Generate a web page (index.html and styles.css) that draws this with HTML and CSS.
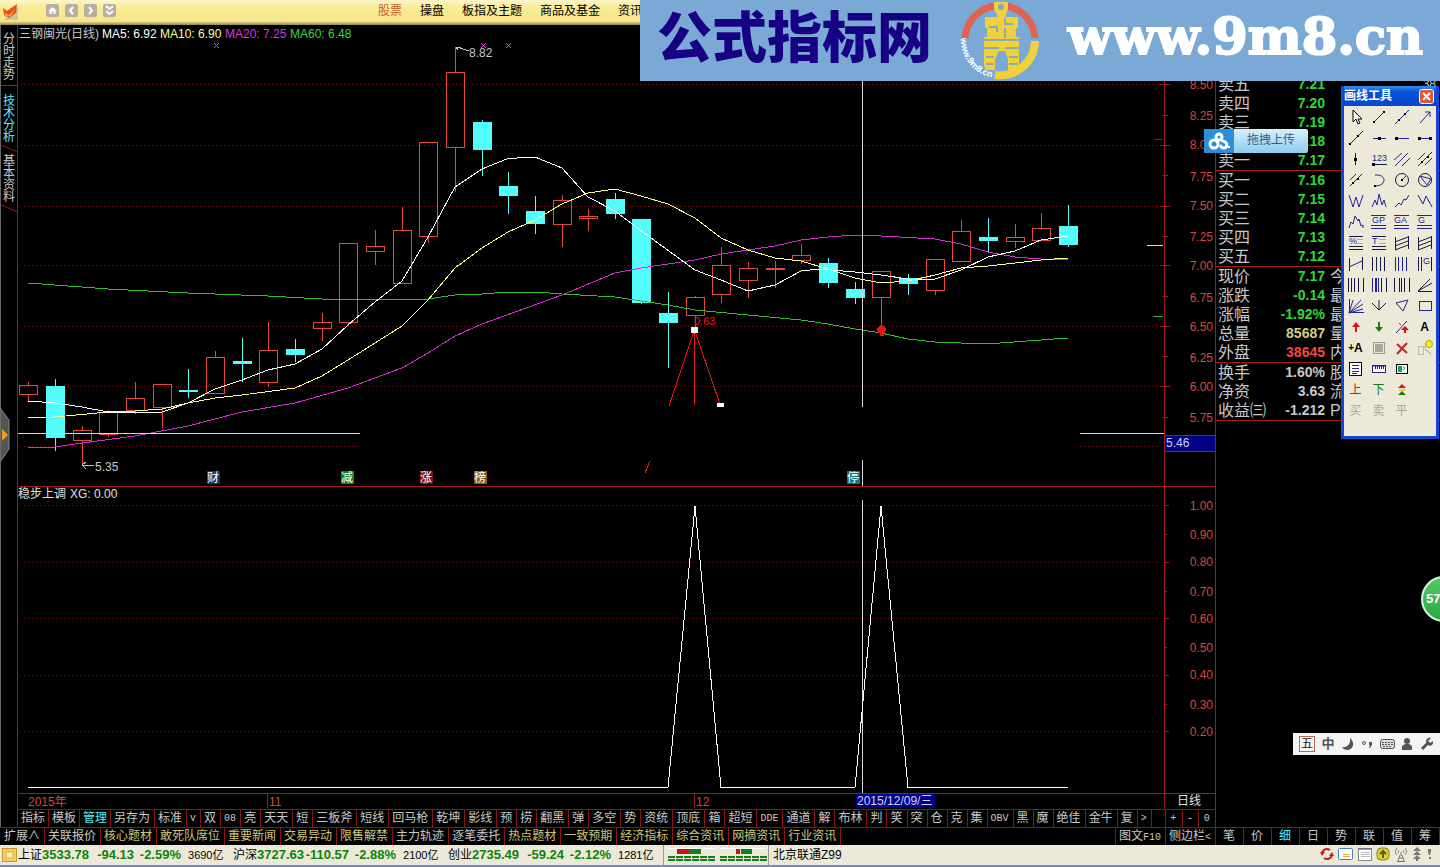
FILE: index.html
```html
<!DOCTYPE html>
<html lang="zh-CN">
<head>
    <meta charset="UTF-8">
    <title>三钢闽光(日线)</title>
    <link rel="stylesheet" href="styles.css">
</head>
<body>
    <header class="topbar">
        <svg class="logo" width="17" height="18" viewBox="0 0 17 18"><path d="M8 5h8v12H3z" fill="#c9c3a8"/><path d="M1 5l4 3L15 1l-1 9-7 5-5-3z" fill="#e8501c"/><path d="M3 10l4 2 7-7-5 8-6 1z" fill="#f9a03a"/></svg>
        <div class="tool-btns">
            <button aria-label="首页"><svg width="13" height="13" viewBox="0 0 13 13"><path d="M2 7l4.500-4L11 7H9.500v3H7.500V8h-2v2h-2V7z" fill="#fff"/></svg></button>
            <button aria-label="后退"><svg width="13" height="13" viewBox="0 0 13 13"><path d="M8 3L5 6.500 8 10" class="w"/></svg></button>
            <button aria-label="前进"><svg width="13" height="13" viewBox="0 0 13 13"><path d="M5 3l3 3.500L5 10" class="w"/></svg></button>
            <button aria-label="更多"><svg width="13" height="13" viewBox="0 0 13 13"><path d="M3 2l3.500 3L10 2M3 7l3.500 3L10 7" class="w"/></svg></button>
        </div>
        <nav class="menu">
            <a href="#" class="on">股票</a>
            <a href="#">操盘</a>
            <a href="#">板指及主题</a>
            <a href="#">商品及基金</a>
            <a href="#">资讯</a>
        </nav>
    </header>

    <div class="main">
        <nav class="side">
            <button>分时走势</button>
            <svg width="17" height="8" viewBox="0 0 17 8"><path d="M0 .5h17"/></svg>
            <button class="on">技术分析</button>
            <svg width="17" height="8" viewBox="0 0 17 8"><path d="M0 0l17 7"/></svg>
            <button>基本资料</button>
            <svg width="17" height="8" viewBox="0 0 17 8"><path d="M0 0l17 7"/></svg>
        </nav>

        <div class="work">
            <svg class="chart" viewBox="18 25 1198 784">
                <!-- grid -->
                <g class="grid">
                    <path d="M20 84.500H1160M20 145.500H1160M20 206.500H1160M20 265.500H1160M20 326.500H1160M20 386.500H1160M20 446.500H360M1080 446.500H1160"/>
                    <path d="M20 505.500H1160M20 562.500H1160M20 618.500H1160M20 675.500H1160M20 731.500H1160"/>
                </g>
                <g class="frame">
                    <path d="M18.500 486.500H1215M18 793.500H1215M1164.500 25V809M1215.500 25V809M1164.500 486.500H1215"/>
                    <path d="M1160 84.500h10M1162 115.500h6M1160 145.500h10M1162 175.500h6M1160 206.500h10M1162 236.500h6M1160 265.500h10M1162 296.500h6M1160 326.500h10M1162 356.500h6M1160 386.500h10M1162 417.500h6"/>
                    <path d="M1164 505.500h5M1164 534.500h3M1164 562.500h5M1164 591.500h3M1164 618.500h5M1164 647.500h3M1164 675.500h5M1164 704.500h3M1164 731.500h5M1154 139.500h9"/>
                    <path d="M267.500 794v14M694.500 794v14M1215 266.500h1"/>
                </g>

                <!-- candles -->
                <g class="up">
                    <path d="M28.500 382v3m0 9v7M82.500 426v4m0 10v26M108.500 410v2m0 22v3M135.500 382v16m0 12v4M162.500 407v21M215.500 351v6M268.500 322v28m0 33v4M322.500 313v9m0 6v13M348.500 323v3M375.500 230v16m0 6v13M402.500 207v23M428.500 236v7M455.500 47v25m0 75v45M562.500 195v5m0 24v23M588.500 209v7m0 2v13M695.500 296v1m0 19v12M721.500 247v18m0 29v9M748.500 262v6m0 12v18M775.500 261v27M801.500 244v11m0 6v3M881.500 297v28M935.500 290v5M961.500 220v11M1015.500 224v13m0 5v6M1041.500 213v15"/>
                    <path d="M19.500 385.500h18v9h-18zM73.500 430.500h18v10h-18zM99.500 412.500h18v22h-18zM126.500 398.500h18v12h-18zM153.500 384.500h18v23h-18zM206.500 357.500h18v36h-18zM259.500 350.500h18v32h-18zM313.500 322.500h18v6h-18zM339.500 243.500h18v79h-18zM366.500 246.500h18v5h-18zM393.500 230.500h18v53h-18zM419.500 142.500h18v94h-18zM446.500 72.500h18v75h-18zM553.500 200.500h18v24h-18zM579.500 216.500h18v2h-18zM686.500 297.500h18v18h-18zM712.500 265.500h18v29h-18zM739.500 268.500h18v12h-18zM766.500 268.500h18v1h-18zM792.500 255.500h18v5h-18zM872.500 271.500h18v26h-18zM926.500 259.500h18v31h-18zM952.500 231.500h18v30h-18zM1006.500 237.500h18v4h-18zM1032.500 228.500h18v12h-18z"/>
                </g>
                <g class="down">
                    <path d="M55.500 379v72M188.500 369v29M242.500 338v44M295.500 339v23M482.500 120v56M508.500 172v42M535.500 196v38M615.500 193v26M641.500 219v85M668.500 292v76M828.500 258v30M855.500 282v22M908.500 274v21M988.500 218v34M1068.500 205v42"/>
                    <path d="M46 386h19v52H46zM179 390h19v2h-19zM233 361h19v3h-19zM286 349h19v6h-19zM473 122h19v28h-19zM499 186h19v10h-19zM526 211h19v13h-19zM606 199h19v15h-19zM632 219h19v84h-19zM659 313h19v10h-19zM819 263h19v20h-19zM846 289h19v9h-19zM899 278h19v6h-19zM979 237h19v4h-19zM1059 226h19v19h-19z" class="fill"/>
                </g>

                <!-- moving averages -->
                <polyline class="ma60" points="28,283 55,285 108,289 188,293 268,296 322,299 348,299 402,300 428,299 455,295 482,294 508,292 535,292 562,294 615,297 641,301 668,305 695,310 748,315 801,320 828,324 855,329 881,333 908,339 935,342 961,343 1000,343 1041,340 1068,338"/>
                <polyline class="ma20" points="28,447 55,447 82,443 135,436 188,426 242,412 295,403 348,388 402,368 428,353 455,336 482,324 562,295 615,273 641,268 695,260 721,254 775,246 801,240 828,237 855,235 881,236 935,239 961,244 988,252 1015,257 1041,259 1068,259"/>
                <polyline class="ma10" points="28,418 55,417 108,412 135,411 162,409 188,403 215,398 242,395 295,388 322,376 348,360 402,326 428,300 455,268 482,248 508,232 535,220 562,204 588,193 615,189 641,196 668,204 695,218 721,238 748,250 775,258 801,261 828,269 855,278 881,283 908,281 935,275 961,268 988,266 1015,263 1041,260 1068,258"/>
                <polyline class="ma5" points="28,401 55,403 82,407 108,412 162,412 188,403 215,389 242,380 268,370 295,364 322,349 348,325 375,302 402,281 428,237 455,187 482,169 508,158.5 535,157 562,168 588,197 615,211 651,238 695,270 721,280 748,291 775,285 801,271 820,269 855,272 881,275 908,279 935,279 961,270 988,257 1015,251 1041,240 1068,236"/>

                <!-- crosshair -->
                <path class="cross" d="M18 433.500H360M1080 433.500H1164M862.500 81V407M862.500 460V486M862.500 500V793"/>
                <path class="cross" d="M1147 245.500h16"/>
                <path class="ma60" d="M1153 316.500h10"/>

                <!-- drawn lines and signals -->
                <path class="draw" d="M694.500 330L669 406M694.500 330V405M694.500 330L720 404"/>
                <path class="up-line" d="M645 473l5-12"/>
                <path d="M691 327h7v6h-7zM717 403h7v4h-7z" fill="#fff"/>
                <path d="M881.500 324l5 5-2 4h-1v3h-4v-3h-1l-2-4z" fill="#e01818"/>
                <path class="mark" d="M214 43l5 5m0-5l-5 5M481 43l5 5m0-5l-5 5M506 43l5 5m0-5l-5 5"/>
                <path class="hint" d="M457 47l12 4M456 47h5M456 47l2 3M82 465.500h12M82 465l4-3M82 465l4 4"/>
                <text x="694" y="325" class="t11 red">0.63</text>
                <text x="469" y="57" class="gray">8.82</text>
                <text x="95" y="471" class="gray">5.35</text>

                <!-- events -->
                <g class="event">
                    <rect x="207" y="471" width="13" height="13" fill="#123a68"/><text x="207" y="482">财</text>
                    <rect x="341" y="471" width="13" height="13" fill="#12801a"/><text x="341" y="482">减</text>
                    <rect x="420" y="471" width="13" height="13" fill="#7c1010"/><text x="420" y="482">涨</text>
                    <rect x="474" y="471" width="13" height="13" fill="#8a5a1c"/><text x="474" y="482">榜</text>
                    <rect x="847" y="471" width="13" height="13" fill="#11777c"/><text x="847" y="482">停</text>
                </g>

                <!-- indicator XG -->
                <polyline class="ma5" points="28,787.500 668,787.500 695,506 721,787.500 855,787.500 881,506 908,787.500 1068,787.500"/>

                <!-- titles -->
                <text x="19" y="38" class="gray">三钢闽光(日线)</text>
                <text x="102" y="38" fill="#fff">MA5: 6.92</text>
                <text x="160" y="38" fill="#ffff90">MA10: 6.90</text>
                <text x="225" y="38" fill="#d838d8">MA20: 7.25</text>
                <text x="290" y="38" fill="#38d838">MA60: 6.48</text>
                <text x="18" y="498" class="light">稳步上调</text>
                <text x="70" y="498" class="light">XG: 0.00</text>

                <!-- price scale -->
                <g class="scale">
                    <text x="1213" y="89">8.50</text>
                    <text x="1213" y="120">8.25</text>
                    <text x="1213" y="149">8.00</text>
                    <text x="1213" y="181">7.75</text>
                    <text x="1213" y="210">7.50</text>
                    <text x="1213" y="241">7.25</text>
                    <text x="1213" y="270">7.00</text>
                    <text x="1213" y="302">6.75</text>
                    <text x="1213" y="331">6.50</text>
                    <text x="1213" y="362">6.25</text>
                    <text x="1213" y="391">6.00</text>
                    <text x="1213" y="422">5.75</text>
                    <text x="1213" y="510">1.00</text>
                    <text x="1213" y="539">0.90</text>
                    <text x="1213" y="566">0.80</text>
                    <text x="1213" y="596">0.70</text>
                    <text x="1213" y="623">0.60</text>
                    <text x="1213" y="652">0.50</text>
                    <text x="1213" y="679">0.40</text>
                    <text x="1213" y="709">0.30</text>
                    <text x="1213" y="736">0.20</text>
                </g>
                <rect x="1164.500" y="435.500" width="51" height="16" class="cur"/>
                <text x="1166" y="447" fill="#d0d0ff">5.46</text>

                <!-- time scale -->
                <text x="28" y="806" class="red2">2015年</text>
                <text x="269" y="806" class="red2">11</text>
                <text x="696" y="806" class="red2">12</text>
                <rect x="856" y="794" width="79" height="14" fill="#000084"/>
                <text x="857" y="805" fill="#d0d0ff">2015/12/09/三</text>
                <text x="1177" y="805" class="light">日线</text>
            </svg>

            <div class="bar templates">
                <button class="tab">指标</button>
                <button class="tab">模板</button>
                <button class="tab on">管理</button>
                <button>另存为</button>
                <button>标准</button>
                <button class="en">v</button>
                <button>双</button>
                <button class="en">08</button>
                <button>亮</button>
                <button>天天</button>
                <button>短</button>
                <button>三板斧</button>
                <button>短线</button>
                <button>回马枪</button>
                <button>乾坤</button>
                <button>影线</button>
                <button>预</button>
                <button>捞</button>
                <button>翻黑</button>
                <button>弹</button>
                <button>多空</button>
                <button>势</button>
                <button>资统</button>
                <button>顶底</button>
                <button>箱</button>
                <button>超短</button>
                <button class="en">DDE</button>
                <button>通道</button>
                <button>解</button>
                <button>布林</button>
                <button>判</button>
                <button>笑</button>
                <button>突</button>
                <button>仓</button>
                <button>克</button>
                <button>集</button>
                <button class="en">OBV</button>
                <button>黑</button>
                <button>魔</button>
                <button>绝佳</button>
                <button>金牛</button>
                <button>复</button>
                <button class="en">&gt;</button>
                <div class="zoom">
                    <button class="en">+</button>
                    <button class="en">-</button>
                    <button class="en">0</button>
                </div>
            </div>
        </div>

        <aside class="quotes">
            <table>
                <tbody>
                    <tr><th>卖五</th><td class="g">7.21</td><td class="more r">38</td></tr>
                    <tr><th>卖四</th><td class="g">7.20</td><td></td></tr>
                    <tr><th>卖三</th><td class="g">7.19</td><td></td></tr>
                    <tr><th>卖二</th><td class="g">7.18</td><td></td></tr>
                    <tr><th>卖一</th><td class="g">7.17</td><td></td></tr>
                </tbody>
                <tbody>
                    <tr><th>买一</th><td class="g">7.16</td><td></td></tr>
                    <tr><th>买二</th><td class="g">7.15</td><td></td></tr>
                    <tr><th>买三</th><td class="g">7.14</td><td></td></tr>
                    <tr><th>买四</th><td class="g">7.13</td><td></td></tr>
                    <tr><th>买五</th><td class="g">7.12</td><td></td></tr>
                </tbody>
                <tbody>
                    <tr><th>现价</th><td class="g">7.17</td><td class="more">今</td></tr>
                    <tr><th>涨跌</th><td class="g">-0.14</td><td class="more">最</td></tr>
                    <tr><th>涨幅</th><td class="g">-1.92%</td><td class="more">最</td></tr>
                    <tr><th>总量</th><td class="y">85687</td><td class="more">量</td></tr>
                    <tr><th>外盘</th><td class="rd">38645</td><td class="more">内</td></tr>
                </tbody>
                <tbody>
                    <tr><th>换手</th><td>1.60%</td><td class="more">股</td></tr>
                    <tr><th>净资</th><td>3.63</td><td class="more">流</td></tr>
                    <tr><th>收益㈢</th><td>-1.212</td><td class="more">P</td></tr>
                </tbody>
            </table>
        </aside>
    </div>

    <div class="bar info">
        <button>扩展∧</button>
        <button>关联报价</button>
        <button class="hot">核心题材</button>
        <button class="hot">敢死队席位</button>
        <button class="hot">重要新闻</button>
        <button class="hot">交易异动</button>
        <button class="hot">限售解禁</button>
        <button>主力轨迹</button>
        <button>逐笔委托</button>
        <button class="hot">热点题材</button>
        <button class="hot">一致预期</button>
        <button class="hot">经济指标</button>
        <button class="hot">综合资讯</button>
        <button class="hot">网摘资讯</button>
        <button class="hot">行业资讯</button>
        <div class="switch">
            <button>图文<span class="en">F10</span></button>
            <button>侧边栏<span class="en">&lt;</span></button>
        </div>
        <div class="pages">
            <button>笔</button>
            <button>价</button>
            <button class="on">细</button>
            <button>日</button>
            <button>势</button>
            <button>联</button>
            <button>值</button>
            <button>筹</button>
        </div>
    </div>

    <footer class="status">
        <svg width="16" height="14" viewBox="0 0 16 14"><rect x=".5" y=".5" width="14" height="13" fill="#f3cf62" stroke="#c79a2a"/><rect x="4" y="4" width="7" height="6" fill="#fff3b8" stroke="#d9ac3d"/></svg>
        <div class="index"><span>上证</span><b class="val">3533.78</b><b class="chg">-94.13</b><b class="pct">-2.59%</b><span class="amt">3690亿</span></div>
        <div class="index"><span>沪深</span><b class="val">3727.63</b><b class="chg">-110.57</b><b class="pct">-2.88%</b><span class="amt">2100亿</span></div>
        <div class="index"><span>创业</span><b class="val">2735.49</b><b class="chg">-59.24</b><b class="pct">-2.12%</b><span class="amt">1281亿</span></div>
        <div class="meter">
            <svg width="100" height="14" viewBox="0 0 100 14">
                <path d="M0 .5h47M52 .5h46" stroke="#fff"/>
                <path d="M9 1h12v5H9zM68 1h4v5h-4z" fill="#c01818"/>
                <path d="M21 1h12v5H21zM73 1h11v5H73z" fill="#168016"/>
                <path d="M0 9h47M0 12h47M52 9h47M52 12h47" stroke="#168016" stroke-width="2" stroke-dasharray="7 1"/>
            </svg>
        </div>
        <span class="server">北京联通Z99</span>
        <div class="tray">
            <svg width="14" height="14" viewBox="0 0 14 14"><path d="M2 6a5 5 0 0 1 8-3M12 8a5 5 0 0 1-8 3" fill="none" stroke="#c02020" stroke-width="2"/><path d="M0 5h5L2 9zM9 9l3-4 2 4z" fill="#c02020"/></svg>
            <svg width="16" height="14" viewBox="0 0 16 14"><rect x=".5" y="1.500" width="14" height="11" rx="1" fill="#fff" stroke="#4a7fc0"/><path d="M5 7.500h7M5 9.500h7" stroke="#d8b048"/></svg>
            <svg width="14" height="14" viewBox="0 0 14 14"><rect x=".5" y="1.500" width="13" height="12" fill="#fff" stroke="#888"/><path d="M.5 2h13" stroke="#557"/><path d="M3 5.500h9M3 7.500h9M3 9.500h9" stroke="#bbb"/></svg>
            <svg width="14" height="14" viewBox="0 0 14 14"><rect x="1" y="1" width="12" height="12" rx="4" fill="#d8d438" stroke="#8a8410"/><path d="M7 11V5M4 7l3-3 3 3" fill="none" stroke="#6a5c00" stroke-width="2"/></svg>
            <svg width="14" height="16" viewBox="0 0 14 16"><path d="M3 1c-2 2-2 5 0 7M11 1c2 2 2 5 0 7M5 3c-1 1-1 2 0 3M9 3c1 1 1 2 0 3M7 5v4M6 8l-2 6M8 8l2 6M3 14.500h8M5 11h4" fill="none" stroke="#777"/></svg>
            <svg width="10" height="14" viewBox="0 0 10 14"><path d="M5 0l4 4H1zM5 4l4 4H1zM5 8l4 4H6v2H4v-2H1z" fill="#777"/></svg>
            <svg width="6" height="14" viewBox="0 0 6 14"><path d="M2 2h3v3l-1 3H3L2 5zM3 10h2v2H3z" fill="#777"/></svg>
        </div>
    </footer>

    <button class="handle" aria-label="展开"><svg width="11" height="54" viewBox="0 0 11 54"><path d="M0 0l9 12v29L0 54z" fill="#555" stroke="#888"/><path d="M2 21l6 6-6 6z" fill="#f0a020"/></svg></button>

    <div class="banner">
        <strong class="name">公式指标网</strong>
        <svg class="coin" width="80" height="80" viewBox="0 0 80 80">
            <defs><path id="arc" d="M1 38a38 38 0 0 0 38 40"/></defs>
            <path d="M5 38A35 35 0 0 1 34 6M47 6a35 35 0 0 1 28 32" fill="none" stroke="#dc6450" stroke-width="7"/>
            <path d="M75 41A35 35 0 0 1 35 75" fill="none" stroke="#f0d03c" stroke-width="8"/>
            <path d="M34 2h14v8l-2 4v3h12v10l-2 2v8h3v29l-2 4h-9V59l-3-8h-6l-4 8v11H26l-2-4V37h3v-8l-2-2V17h12v-3l-3-4z" fill="#f0d03c"/>
            <circle cx="41" cy="7" r="3" fill="#7ba9d6"/>
            <path d="M24 40h35M24 48h15M45 48h14M26 57h8M49 57h9M26 64h8M49 64h9M29 27h8v5M45 18v6h8M45 28v10" stroke="#8aabb8" stroke-width="2" fill="none"/>
            <text class="ring"><textPath href="#arc">www.9m8.cn</textPath></text>
        </svg>
        <strong class="site">www.9m8.cn</strong>
    </div>

    <button class="upload">
        <svg width="30" height="24" viewBox="0 0 30 24"><rect width="30" height="24" fill="#2a90d8"/><g fill="none" stroke="#fff" stroke-width="3"><circle cx="15" cy="8" r="3"/><circle cx="10" cy="15" r="4"/><path d="M17 11l4 2c3 2 2 6-1 6-2 0-3-1-4-3"/></g><path d="M24 17h2v2h-2z" fill="#fff"/></svg>
        <span>拖拽上传</span>
    </button>

    <section class="palette">
        <div class="palette-title">
            <span>画线工具</span>
            <button aria-label="关闭"><svg width="13" height="13" viewBox="0 0 13 13"><path d="M3 3l7 7M10 3l-7 7" stroke="#fff" stroke-width="2"/></svg></button>
        </div>
        <div class="palette-grid">
            <button aria-label="选择"><svg viewBox="0 0 16 16"><path d="M5 1v12l3-3 2 5 2-1-2-4h4z" fill="#fff" stroke="#000"/></svg></button>
            <button aria-label="线段"><svg viewBox="0 0 16 16"><path class="b" d="M3 13L13 3"/><path class="d" d="M2 12h2v2H2zM12 2h2v2h-2z"/></svg></button>
            <button aria-label="直线"><svg viewBox="0 0 16 16"><path class="b" d="M1 15L15 1"/><path class="d" d="M4 10h2v2H4zM10 4h2v2h-2z"/></svg></button>
            <button aria-label="箭头"><svg viewBox="0 0 16 16"><path class="b" d="M3 14L13 3M8 3h5v5"/></svg></button>

            <button aria-label="射线"><svg viewBox="0 0 16 16"><path class="k" d="M1 15L15 1"/><path class="d" d="M1 13h2v2H1zM9 5h2v2H9z"/></svg></button>
            <button aria-label="水平线"><svg viewBox="0 0 16 16"><path class="b" d="M2 8.500h13"/><path class="d" d="M7 7h3v3H7z"/></svg></button>
            <button aria-label="水平射线"><svg viewBox="0 0 16 16"><path class="b" d="M2 8.500h13"/><path class="d" d="M1 7h3v3H1z"/></svg></button>
            <button aria-label="水平线段"><svg viewBox="0 0 16 16"><path class="b" d="M2 8.500h12"/><path class="d" d="M1 7h3v3H1zM12 7h3v3h-3z"/></svg></button>

            <button aria-label="垂直线"><svg viewBox="0 0 16 16"><path class="k" d="M7.500 2v12"/><path class="d" d="M6 7h3v3H6z"/></svg></button>
            <button aria-label="价格标签"><svg viewBox="0 0 16 16"><text x="1" y="10">123</text><path class="k" d="M2 13.500h14"/><path class="d" d="M1 12h3v3H1z"/></svg></button>
            <button aria-label="平行线"><svg viewBox="0 0 16 16"><path class="b" d="M0 9l8-7M1 15L14 2M8 15l8-8"/></svg></button>
            <button aria-label="平行直线"><svg viewBox="0 0 16 16"><path class="b" d="M1 9l7-7M1 15L15 1M8 14l7-7"/><path class="d" d="M4 10h2v2H4zM10 5h2v2h-2z"/></svg></button>

            <button aria-label="价格通道"><svg viewBox="0 0 16 16"><path class="b" d="M2 8l6-6M2 14L14 2"/><path class="d" d="M4 10h2v2H4zM9 6h2v2H9z"/></svg></button>
            <button aria-label="圆弧"><svg viewBox="0 0 16 16"><path class="b" d="M4 3c12-1 12 11 0 11"/><path class="d" d="M3 13h2v2H3z"/></svg></button>
            <button aria-label="圆"><svg viewBox="0 0 16 16"><circle class="k" cx="8" cy="8" r="6.500"/><path class="b" d="M8 8l4-4"/><path class="d" d="M7 7h2v2H7z"/></svg></button>
            <button aria-label="外接圆"><svg viewBox="0 0 16 16"><circle class="k" cx="8" cy="8" r="6.500"/><path class="b" d="M3 4l11 3-4 6z"/></svg></button>

            <button aria-label="W线"><svg viewBox="0 0 16 16"><path class="b" d="M1 2l4 12 3-10 3 10 4-12"/></svg></button>
            <button aria-label="八浪线"><svg viewBox="0 0 16 16"><path class="b" d="M1 14l3-7 2 5 2-11 3 11 2-5 2 7"/></svg></button>
            <button aria-label="五浪线"><svg viewBox="0 0 16 16"><path class="b" d="M1 14l4-4 2 2 3-6 2 1 3-5"/></svg></button>
            <button aria-label="三浪线"><svg viewBox="0 0 16 16"><path class="b" d="M1 2l5 9 3-8 6 11"/></svg></button>

            <button aria-label="波浪"><svg viewBox="0 0 16 16"><path class="b" d="M1 14l2-6 2 2 2-8 3 5 1-2 2 7 2-1v3"/></svg></button>
            <button aria-label="GP"><svg viewBox="0 0 16 16"><text x="1" y="9">GP</text><path class="b" d="M0 1.500h15M0 11.500h15M0 14.500h15"/></svg></button>
            <button aria-label="GA"><svg viewBox="0 0 16 16"><text x="0" y="9">GA</text><path class="b" d="M0 1.500h15M0 11.500h15M0 14.500h15"/></svg></button>
            <button aria-label="G"><svg viewBox="0 0 16 16"><text x="1" y="9">G</text><path class="b" d="M0 1.500h15M0 11.500h15M0 14.500h15"/></svg></button>

            <button aria-label="百分比"><svg viewBox="0 0 16 16"><text x="1" y="9">%</text><path class="k" d="M1 1.500h14M1 11.500h14M1 14.500h14"/><path class="s" d="M9 4.500h6M9 8.500h6"/></svg></button>
            <button aria-label="T线"><svg viewBox="0 0 16 16"><text x="1" y="9">T</text><path class="k" d="M1 1.500h14M1 11.500h14M1 14.500h14"/><path class="s" d="M8 4.500h7M8 8.500h7"/></svg></button>
            <button aria-label="上升通道"><svg viewBox="0 0 16 16"><path class="k" d="M1.500 2v13M14.500 1v13M1 7l13-5M1 11l13-5M1 15l13-5"/></svg></button>
            <button aria-label="线性回归带"><svg viewBox="0 0 16 16"><path class="k" d="M1.500 2v13M14.500 1v13M1 7l13-5M1 11l13-5M1 15l13-5"/></svg></button>

            <button aria-label="线性回归"><svg viewBox="0 0 16 16"><path class="k" d="M1.500 2v13M14.500 1v13"/><path class="b" d="M1 11l13-6"/></svg></button>
            <button aria-label="周期线"><svg viewBox="0 0 16 16"><path class="k" d="M1.500 1v14M5.500 1v14M9.500 1v14M13.500 1v14"/></svg></button>
            <button aria-label="费波拉契"><svg viewBox="0 0 16 16"><path class="b" d="M1.500 1v14M4.500 1v14M8.500 1v14M12.500 1v14"/></svg></button>
            <button aria-label="阻速线"><svg viewBox="0 0 16 16"><text x="6" y="8">G</text><path class="k" d="M1.500 1v14M4.500 1v14M14.500 1v14"/></svg></button>

            <button aria-label="江恩周期"><svg viewBox="0 0 16 16"><path class="k" d="M.5 1v14M3.500 1v14M6.500 1v14M10.500 1v14M15.500 1v14"/></svg></button>
            <button aria-label="卢卡斯"><svg viewBox="0 0 16 16"><path class="b" d="M1.500 1v14M4.500 1v14M5.500 1v14M7.500 1v14"/><path class="k" d="M10.500 1v14M15.500 1v14"/></svg></button>
            <button aria-label="时间线"><svg viewBox="0 0 16 16"><path class="k" d="M.5 1v14M5.500 1v14M7.500 1v14M10.500 1v14M15.500 1v14"/></svg></button>
            <button aria-label="阻力线"><svg viewBox="0 0 16 16"><path class="k" d="M1 14L13 2M1 14l14-8M1 14.500h14"/></svg></button>

            <button aria-label="甘氏线"><svg viewBox="0 0 16 16"><path class="b" d="M1.500 1v14M1 14.500h15M1 15L5 2M1 15L13 2M1 15l14-9M1 15l14-4"/></svg></button>
            <button aria-label="安德鲁音叉"><svg viewBox="0 0 16 16"><path class="k" d="M1 5l7 7 7-7M8 2v10"/></svg></button>
            <button aria-label="三角形"><svg viewBox="0 0 16 16"><path class="b" d="M2 5l12-3-5 11z"/></svg></button>
            <button aria-label="矩形"><svg viewBox="0 0 16 16"><rect class="b" x="2.500" y="3.500" width="12" height="9"/></svg></button>

            <button aria-label="涨标记"><svg viewBox="0 0 16 16"><path d="M8 3l4 5H9v5H7V8H4z" fill="#e01010"/></svg></button>
            <button aria-label="跌标记"><svg viewBox="0 0 16 16"><path d="M8 13l4-5H9V3H7v5H4z" fill="#108010"/></svg></button>
            <button aria-label="切线"><svg viewBox="0 0 16 16"><path class="b" d="M2 14L13 2"/><path d="M11 7l4 4h-3v3h-2v-3H7z" fill="#e01010"/><path d="M5 4l2 2" stroke="#e01010"/></svg></button>
            <button class="a">A</button>

            <button class="a"><small>+</small>A</button>
            <button aria-label="隐藏"><svg viewBox="0 0 16 16"><rect x="2.500" y="2.500" width="11" height="11" fill="none" stroke="#999"/><path d="M4 4h8v8H4z" fill="#aaa698"/></svg></button>
            <button aria-label="删除"><svg viewBox="0 0 16 16"><path d="M3 4l10 9M13 3L3 14" stroke="#c82020" stroke-width="2"/></svg></button>
            <button aria-label="提示"><svg viewBox="0 0 16 16"><rect x="1.500" y="6.500" width="5" height="8" fill="none" stroke="#bbb"/><path d="M7 8l3-4M8 9l6 5" stroke="#999"/><circle cx="12" cy="4" r="3.500" fill="#f8f020" stroke="#b0a020"/></svg></button>

            <button aria-label="列表"><svg viewBox="0 0 16 16"><rect x="1.500" y="1.500" width="12" height="13" fill="#fff" stroke="#000"/><path class="b" d="M4 4.500h7M4 7.500h7M4 10.500h7M4 12.500h5"/></svg></button>
            <button aria-label="测量"><svg viewBox="0 0 16 16"><rect x="1.500" y="4.500" width="13" height="7" fill="#fff" stroke="#22227a"/><path class="b" d="M1 5h13M4.500 5v3M6.500 5v3M8.500 5v3M10.500 5v3M12.500 5v3"/></svg></button>
            <button aria-label="保存图片"><svg viewBox="0 0 16 16"><rect x="2.500" y="3.500" width="11" height="9" fill="#fff" stroke="#000"/><path d="M4 5h4v6H4z" fill="#1c9a70"/><path d="M9 6l2 1-2 2" fill="none" stroke="#1c9a70"/></svg></button>
            <i></i>

            <button class="rd">上</button>
            <button class="gn">下</button>
            <button aria-label="多空"><svg viewBox="0 0 16 16"><path d="M8 2l4 4H4z" fill="#e01010"/><path d="M5 7h6v2H5z" fill="#f0d020"/><path d="M8 9l4 4H4z" fill="#108010"/></svg></button>
            <i></i>

            <button class="off">买</button>
            <button class="off">卖</button>
            <button class="off">平</button>
            <i></i>
        </div>
    </section>

    <div class="ball">57</div>

    <div class="ime">
        <span class="wubi">五</span>
        <b>中</b>
        <svg width="14" height="14" viewBox="0 0 14 14"><path d="M9 1c5 4 4 11-2 12-3 0-5-1-6-3 5 1 9-3 8-9z" fill="#555"/></svg>
        <svg width="12" height="14" viewBox="0 0 12 14"><circle cx="3" cy="6" r="1.500" fill="none" stroke="#555"/><path d="M8 5h3v3l-2 3H8l1-3H8z" fill="#555"/></svg>
        <svg width="15" height="12" viewBox="0 0 15 12"><rect x=".5" y="1.500" width="14" height="9" rx="2" fill="#ddd" stroke="#555"/><path d="M2 4.500h11M2 6.500h11M3 8.500h9" stroke="#555" stroke-dasharray="2 1"/></svg>
        <svg width="12" height="14" viewBox="0 0 12 14"><circle cx="6" cy="4" r="3" fill="#555"/><path d="M1 13V9l3-2h4l3 2v4z" fill="#555"/></svg>
        <svg width="14" height="14" viewBox="0 0 14 14"><path d="M2 12l7-7" stroke="#555" stroke-width="3"/><path d="M11 1L8 4l2 2 3-2c1 4-3 6-5 4L6 5c0-3 2-5 5-4z" fill="#555"/></svg>
    </div>
</body>
</html>
```

FILE: styles.css
```css
*{
    margin: 0;
    padding: 0;
    box-sizing: border-box;
}
body{
    height: 100vh;
    display: flex;
    flex-direction: column;
    position: relative;
    overflow: hidden;
    background: #000;
    color: #c8c8c8;
    font: 12px/16px "Liberation Sans","Noto Sans CJK SC",sans-serif;
}
button{
    border: 0;
    background: none;
    color: inherit;
    font: inherit;
    white-space: nowrap;
}
a{
    color: #000;
    text-decoration: none;
}
svg{
    display: block;
    flex: none;
}
.en{
    font-family: "Liberation Mono",monospace;
    font-size: 10px;
}

/* top bar */
.topbar{
    height: 25px;
    flex: none;
    display: flex;
    padding-left: 2px;
    background: linear-gradient(#fcf6cc,#f9ec94 30%,#f6e68c 85%,#8c8458);
}
.logo{
    margin-top: 3px;
}
.tool-btns{
    display: flex;
    gap: 6px;
    margin: 4px 0 0 27px;
}
.tool-btns button{
    width: 13px;
    height: 13px;
    border-radius: 2px;
    background: #b4b0a4;
}
.tool-btns .w{
    fill: none;
    stroke: #fff;
    stroke-width: 2;
}
.menu{
    display: flex;
    gap: 18px;
    margin: 3px 0 0 262px;
}
.menu .on{
    color: #c8602c;
}

/* main */
.main{
    flex: 1;
    min-height: 0;
    display: flex;
}
.side{
    width: 18px;
    flex: none;
    border-left: 1px solid #666;
    border-right: 1px solid #a01818;
}
.side button{
    display: block;
    width: 16px;
    height: 52px;
    padding: 0 2px;
    line-height: 12px;
    white-space: normal;
    word-break: break-all;
}
.side button:first-child{
    height: 60px;
    padding-top: 4px;
}
.side .on{
    color: #58f0f8;
}
.side path{
    stroke: #a01818;
}
.work{
    flex: 1;
    min-width: 0;
    display: flex;
    flex-direction: column;
}
.chart{
    flex: 1;
    width: 100%;
    min-height: 0;
}
.chart text{
    font-size: 12px;
}
.chart path,.chart polyline{
    shape-rendering: crispEdges;
}
.chart .grid{
    stroke: #6c1010;
    stroke-dasharray: 1 3;
}
.chart .frame{
    stroke: #a01818;
}
.chart .up{
    fill: none;
    stroke: #e04840;
}
.chart .down{
    stroke: #54fcfc;
}
.chart .fill{
    fill: #54fcfc;
    stroke: none;
}
.ma5,.ma10,.ma20,.ma60,.cross,.draw,.mark,.hint,.up-line{
    fill: none;
    stroke: #fff;
}
.ma10{
    stroke: #ffff90;
}
.ma20{
    stroke: #d030d0;
}
.ma60{
    stroke: #30c030;
}
.draw,.up-line{
    stroke: #e01818;
}
.mark{
    stroke: #e040e0;
}
.cross{
    stroke: #d8d8d8;
}
.hint{
    stroke: #c8c8c8;
}
.chart .gray{
    fill: #c8c8c8;
}
.chart .light{
    fill: #e0e0e0;
}
.chart .red{
    fill: #e02020;
}
.chart .t11{
    font-size: 11px;
}
.chart .red2,.scale{
    fill: #d84838;
}
.scale{
    text-anchor: end;
}
.event text{
    fill: #fff;
}
.cur{
    fill: #000084;
    stroke: #a01818;
}

/* bars */
.bar{
    height: 18px;
    flex: none;
    display: flex;
    border-top: 1px solid #8c1414;
    overflow: hidden;
}
.bar button{
    flex: none;
    height: 17px;
    padding: 0 4px 0 3px;
    border-right: 1px solid #8c1414;
    line-height: 17px;
}
.bar .tab{
    padding: 0 3px;
}
.bar .on{
    color: #58f0f8;
}
.bar .hot{
    color: #d0c478;
}
.info{
    padding-left: 1px;
}
.zoom{
    width: 51px;
    margin-left: auto;
    display: flex;
    border-left: 1px solid #8c1414;
}
.bar .zoom button,.bar .pages button{
    flex: 1;
}
.switch{
    display: flex;
    margin-left: auto;
    border-left: 1px solid #8c1414;
}
.pages{
    width: 224px;
    flex: none;
    display: flex;
}

/* quotes */
.quotes{
    width: 224px;
    flex: none;
    padding-top: 50px;
}
.quotes table{
    width: 100%;
    border-spacing: 0;
    table-layout: fixed;
}
.quotes tr:last-child > *{
    border-bottom: 1px solid #a01818;
}
.quotes th{
    width: 54px;
    padding-left: 2px;
    text-align: left;
    font-size: 16px;
    font-weight: normal;
    line-height: 19px;
    white-space: nowrap;
}
.quotes td{
    width: 55px;
    text-align: right;
    font-size: 14px;
    font-weight: bold;
    line-height: 19px;
}
.quotes td:last-child{
    width: auto;
    padding: 0 4px 0 5px;
    text-align: left;
    font-size: 16px;
    font-weight: normal;
}
.quotes td.r:last-child{
    text-align: right;
    font-size: 12px;
}
.quotes .g{
    color: #30d838;
}
.quotes .y{
    color: #d8cc80;
}
.quotes .rd{
    color: #f04840;
}

/* status */
.status{
    height: 22px;
    flex: none;
    display: flex;
    align-items: center;
    padding-left: 2px;
    background: #ece9d8;
    border-bottom: 2px solid #6c90c8;
    color: #000;
}
.index{
    width: 215px;
    flex: none;
    display: flex;
}
.index b{
    color: #0c840c;
    font-size: 13px;
}
.val{
    width: 48px;
}
.chg{
    width: 44px;
    text-align: right;
}
.pct{
    width: 47px;
    text-align: right;
}
.amt{
    padding-left: 7px;
    font-size: 11px;
}
.meter{
    padding: 3px 0 3px 4px;
    border-left: 1px solid #999;
    border-right: 1px solid #999;
}
.server{
    padding-left: 4px;
}
.tray{
    margin-left: auto;
    padding-right: 8px;
    display: flex;
    gap: 4px;
}

/* floating parts */
.handle{
    position: absolute;
    left: 0;
    top: 408px;
}
.banner{
    position: absolute;
    left: 640px;
    right: 0;
    top: 0;
    height: 81px;
    display: flex;
    gap: 28px;
    padding-left: 17px;
    background: #7ba9d6;
    line-height: 76px;
    white-space: nowrap;
}
.name{
    color: #180084;
    font-size: 55px;
    font-weight: 900;
}
.coin{
    overflow: visible;
}
.ring{
    fill: #fff;
    font-size: 9px;
    font-weight: bold;
}
.site{
    color: #fff;
    font-family: "DejaVu Serif",serif;
    font-size: 51px;
    line-height: 72px;
    -webkit-text-stroke: 2px #fff;
}
.upload{
    position: absolute;
    right: 132px;
    top: 129px;
    width: 104px;
    height: 24px;
    display: flex;
    border-radius: 2px;
    overflow: hidden;
    background: linear-gradient(#d8f0fc,#8cccf0);
    color: #386080;
    line-height: 22px;
}
.upload span{
    flex: 1;
}
.palette{
    position: absolute;
    right: 1px;
    top: 86px;
    width: 98px;
    height: 353px;
    border: solid #1048d0;
    border-width: 0 3px 3px;
    background: #ece9d8;
    color: #22227a;
}
.palette-title{
    height: 20px;
    display: flex;
    align-items: center;
    justify-content: space-between;
    padding-right: 3px;
    background: linear-gradient(#3c8cf8,#0850d8 30%,#0848c8);
    color: #fff;
    font-weight: bold;
}
.palette-title button{
    width: 13px;
    height: 13px;
    border-radius: 2px;
    outline: 1px solid #fff;
    background: #d85838;
}
.palette-grid{
    display: grid;
    grid-template-columns: repeat(4,23px);
    grid-auto-rows: 21px;
}
.palette-grid button{
    display: flex;
    align-items: center;
    justify-content: center;
}
.palette-grid svg{
    width: 16px;
    height: 16px;
}
.palette-grid text{
    fill: #22229a;
    font-size: 9px;
}
.palette-grid .b{
    fill: none;
    stroke: #22229a;
}
.palette-grid .k{
    fill: none;
    stroke: #181840;
}
.palette-grid .s{
    stroke: #aaa698;
}
.palette-grid .d{
    fill: #000;
}
.palette-grid .a{
    color: #000;
    font-weight: bold;
}
.palette-grid .rd{
    color: #c82020;
}
.palette-grid .gn{
    color: #108010;
}
.palette-grid .off{
    color: #aaa698;
}
.ball{
    position: absolute;
    right: -27px;
    top: 576px;
    width: 46px;
    height: 46px;
    padding-left: 3px;
    border: 2px solid #d8f4d8;
    border-radius: 50%;
    background: linear-gradient(#58c868,#28a840);
    color: #fff;
    font-size: 13px;
    font-weight: bold;
    line-height: 42px;
}
.ime{
    position: absolute;
    right: 0;
    top: 733px;
    width: 147px;
    height: 22px;
    display: flex;
    align-items: center;
    justify-content: space-between;
    padding: 0 6px;
    background: #f4f4f4;
    color: #555;
}
.ime b{
    font-size: 13px;
}
.wubi{
    width: 16px;
    height: 16px;
    border: 1px solid #b86850;
    color: #222;
    line-height: 14px;
    text-align: center;
}
```
